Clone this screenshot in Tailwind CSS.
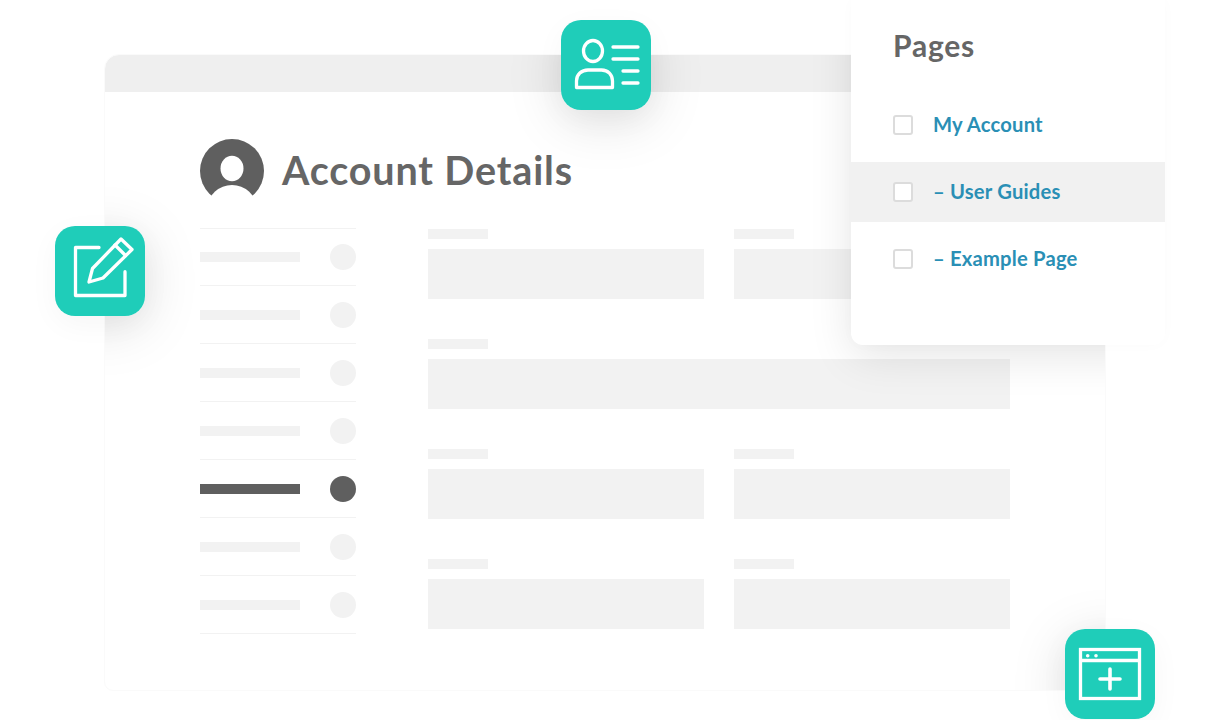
<!DOCTYPE html>
<html lang="en">
<head>
<meta charset="utf-8">
<title>Account Details</title>
<script src="https://cdn.jsdelivr.net/npm/@tailwindcss/browser@4"></script>
</head>
<body class="bg-white">
<div class="relative w-[1210px] h-[720px] overflow-hidden bg-white font-['Lato',sans-serif] pt-[55px] pl-[105px]">

  <!-- window -->
  <div class="relative overflow-hidden w-[1000px] h-[635px] rounded-t-[14px] rounded-b-[8px] bg-white outline outline-[#fafafa]">
    <div class="h-[37px] bg-[#efefef]"></div>
    <div class="pl-[95px] pt-[47px]">
      <div class="flex items-center gap-[18px] h-[64px]">
        <svg width="64" height="64" viewBox="0 0 64 64" class="shrink-0">
          <circle cx="32" cy="32" r="32" fill="#5f5f5f"/>
          <ellipse cx="32" cy="29.500" rx="11.500" ry="12.700" fill="#fff"/>
          <ellipse cx="32" cy="68" rx="24" ry="22" fill="#fff"/>
        </svg>
        <h1 class="text-[39.500px] leading-none font-bold tracking-[0.85px] text-[#666] whitespace-nowrap -translate-y-px">Account Details</h1>
      </div>

      <div class="flex mt-[25px]">
        <!-- side list -->
        <div class="w-[156px] shrink-0 border-t border-[#f2f2f2]">
          <div class="h-[57px] flex items-center justify-between border-b border-[#f2f2f2]"><span class="w-[100px] h-[10px] bg-[#f2f2f2]"></span><span class="w-[26px] h-[26px] rounded-full bg-[#f2f2f2]"></span></div>
          <div class="h-[58px] flex items-center justify-between border-b border-[#f2f2f2]"><span class="w-[100px] h-[10px] bg-[#f2f2f2]"></span><span class="w-[26px] h-[26px] rounded-full bg-[#f2f2f2]"></span></div>
          <div class="h-[58px] flex items-center justify-between border-b border-[#f2f2f2]"><span class="w-[100px] h-[10px] bg-[#f2f2f2]"></span><span class="w-[26px] h-[26px] rounded-full bg-[#f2f2f2]"></span></div>
          <div class="h-[58px] flex items-center justify-between border-b border-[#f2f2f2]"><span class="w-[100px] h-[10px] bg-[#f2f2f2]"></span><span class="w-[26px] h-[26px] rounded-full bg-[#f2f2f2]"></span></div>
          <div class="h-[58px] flex items-center justify-between border-b border-[#f2f2f2]"><span class="w-[100px] h-[10px] bg-[#5f5f5f]"></span><span class="w-[26px] h-[26px] rounded-full bg-[#5f5f5f]"></span></div>
          <div class="h-[58px] flex items-center justify-between border-b border-[#f2f2f2]"><span class="w-[100px] h-[10px] bg-[#f2f2f2]"></span><span class="w-[26px] h-[26px] rounded-full bg-[#f2f2f2]"></span></div>
          <div class="h-[58px] flex items-center justify-between border-b border-[#f2f2f2]"><span class="w-[100px] h-[10px] bg-[#f2f2f2]"></span><span class="w-[26px] h-[26px] rounded-full bg-[#f2f2f2]"></span></div>
        </div>

        <!-- form -->
        <div class="ml-[72px] pt-px self-start grid grid-cols-[276px_276px] gap-x-[30px] gap-y-[40px]">
          <div><div class="w-[60px] h-[10px] bg-[#f2f2f2] mb-[10px]"></div><div class="h-[50px] bg-[#f2f2f2]"></div></div>
          <div><div class="w-[60px] h-[10px] bg-[#f2f2f2] mb-[10px]"></div><div class="h-[50px] bg-[#f2f2f2]"></div></div>
          <div class="col-span-2"><div class="w-[60px] h-[10px] bg-[#f2f2f2] mb-[10px]"></div><div class="h-[50px] bg-[#f2f2f2]"></div></div>
          <div><div class="w-[60px] h-[10px] bg-[#f2f2f2] mb-[10px]"></div><div class="h-[50px] bg-[#f2f2f2]"></div></div>
          <div><div class="w-[60px] h-[10px] bg-[#f2f2f2] mb-[10px]"></div><div class="h-[50px] bg-[#f2f2f2]"></div></div>
          <div><div class="w-[60px] h-[10px] bg-[#f2f2f2] mb-[10px]"></div><div class="h-[50px] bg-[#f2f2f2]"></div></div>
          <div><div class="w-[60px] h-[10px] bg-[#f2f2f2] mb-[10px]"></div><div class="h-[50px] bg-[#f2f2f2]"></div></div>
        </div>
      </div>
    </div>

    <!-- shadows of the floating pieces fall only on the window -->
    <div class="absolute left-[746px] top-[-55px] w-[314px] h-[345px] rounded-b-[14px] shadow-[0_12px_44px_rgba(0,0,0,0.10)]"></div>
    <div class="absolute left-[456px] top-[-35px] w-[90px] h-[90px] rounded-[20px] shadow-[0_10px_56px_rgba(0,0,0,0.13)]"></div>
    <div class="absolute left-[-50px] top-[171px] w-[90px] h-[90px] rounded-[20px] shadow-[0_10px_56px_rgba(0,0,0,0.13)]"></div>
    <div class="absolute left-[960px] top-[574px] w-[90px] h-[90px] rounded-[20px] shadow-[0_10px_56px_rgba(0,0,0,0.13)]"></div>
  </div>

  <!-- pages panel -->
  <div class="absolute left-[851px] top-0 w-[314px] h-[345px] rounded-b-[12px] bg-white shadow-[0_0_14px_rgba(0,0,0,0.02)] pt-[26px]">
    <h2 class="ml-[42px] text-[30px] leading-[38px] font-bold tracking-[0.8px] text-[#666]">Pages</h2>
    <ul class="mt-[31px] text-[20.200px] tracking-[0.2px] font-bold text-[#2a8fb5]">
      <li class="h-[60px] flex items-center gap-[20px] pl-[42px]"><span class="w-[20px] h-[20px] rounded-[3px] bg-white border-2 border-[#dcdcdc]"></span><span class="-translate-y-px">My Account</span></li>
      <li class="mt-[7px] h-[60px] flex items-center gap-[20px] pl-[42px] bg-[#f1f1f1]"><span class="w-[20px] h-[20px] rounded-[3px] bg-white border-2 border-[#dcdcdc]"></span><span class="-translate-y-px">– User Guides</span></li>
      <li class="mt-[7px] h-[60px] flex items-center gap-[20px] pl-[42px]"><span class="w-[20px] h-[20px] rounded-[3px] bg-white border-2 border-[#dcdcdc]"></span><span class="-translate-y-px">– Example Page</span></li>
    </ul>
  </div>

  <!-- profile tile -->
  <div class="absolute left-[561px] top-[20px] w-[90px] h-[90px] rounded-[20px] bg-[#1fcdb9] shadow-[0_8px_30px_rgba(0,0,0,0.04)]">
    <svg width="90" height="90" viewBox="0 0 90 90" fill="none" stroke="#fff" stroke-width="3.300" stroke-linecap="round" stroke-linejoin="round">
      <ellipse cx="32" cy="31" rx="9.500" ry="10.500"/>
      <path d="M15.500 67.500V61c0-6.500 5-11 11.500-11h13.500c6.500 0 11 4.500 11 11v6.500z"/>
      <path d="M52 27h25M52 39h25M62 51h15M62 63h15"/>
    </svg>
  </div>

  <!-- edit tile -->
  <div class="absolute left-[55px] top-[226px] w-[90px] h-[90px] rounded-[20px] bg-[#1fcdb9] shadow-[0_8px_30px_rgba(0,0,0,0.04)]">
    <svg width="90" height="90" viewBox="0 0 90 90" fill="none" stroke="#fff" stroke-width="3.300" stroke-linecap="round" stroke-linejoin="round">
      <path d="M44 21.500H20.500V69.500H70V45.700"/>
      <path d="M34 56L37.500 42.500L66 13L77 23.500L48 52Z"/>
      <path d="M60 19L70.500 29.500"/>
    </svg>
  </div>

  <!-- new window tile -->
  <div class="absolute left-[1065px] top-[629px] w-[90px] h-[90px] rounded-[20px] bg-[#1fcdb9] shadow-[0_8px_30px_rgba(0,0,0,0.04)]">
    <svg width="90" height="90" viewBox="0 0 90 90" fill="none" stroke="#fff" stroke-width="3.300">
      <rect x="15.500" y="20.500" width="59" height="49"/>
      <path d="M15.500 31.500H74.500"/>
      <circle cx="22.700" cy="26.700" r="1.800" fill="#fff" stroke="none"/>
      <circle cx="31" cy="26.700" r="1.800" fill="#fff" stroke="none"/>
      <path d="M35 50H55M45 40V60" stroke-width="3.600" stroke-linecap="round"/>
    </svg>
  </div>
</div>
</body>
</html>
